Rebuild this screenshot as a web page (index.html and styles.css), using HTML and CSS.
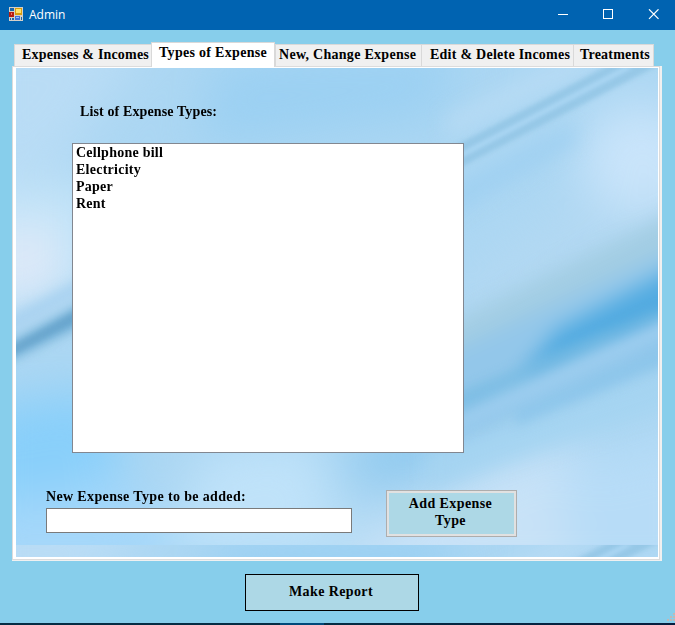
FILE: index.html
```html
<!DOCTYPE html>
<html lang="en">
<head>
<meta charset="utf-8">
<title>Admin</title>
<link rel="stylesheet" href="styles.css">
</head>
<body>
<div class="window">
  <header class="titlebar">
    <svg class="app-icon" width="14" height="14" viewBox="0 0 14 14" shape-rendering="crispEdges">
      <path fill="#d5d0c8" d="M0 0H14V14H0Z"/>
      <path fill="#1967ad" d="M1 1H5V4H1ZM1 11H2V13H1ZM3 11H5V13H3ZM12 10H13V13H12Z"/>
      <path fill="#b61c12" d="M0 5H5V10H0Z"/><path fill="#f0766a" d="M2 6H3V8H2Z"/>
      <path fill="#d89d10" d="M6 1H13V8H6Z"/><path fill="#ffe16b" d="M7 2H12V6H7Z"/>
      <path fill="#3e72d8" d="M6 9H11V13H6Z"/><path fill="#9bc0ff" d="M7 10H10V11H7Z"/>
    </svg>
    <span class="title">Admin</span>
    <div class="controls">
      <svg width="102" height="12" viewBox="0 0 102 12" fill="none" stroke="#fff">
        <path d="M0 5.5H10"/>
        <rect x="45.5" y=".5" width="9" height="9"/>
        <path d="M91 .3L100.5 9.8M100.5 .3L91 9.8" stroke-width="1.2"/>
      </svg>
    </div>
  </header>

  <main class="client">
    <nav class="tabs">
      <div class="tab tab-expenses">Expenses &amp; Incomes</div>
      <div class="tab tab-types active">Types of Expense</div>
      <div class="tab tab-change">New, Change Expense</div>
      <div class="tab tab-edit">Edit &amp; Delete Incomes</div>
      <div class="tab tab-treatments">Treatments</div>
    </nav>
    <section class="frame">
      <div class="page">
        <svg class="backdrop" width="642" height="489" viewBox="0 0 642 489">
          <defs>
            <filter id="b3" x="-20%" y="-20%" width="140%" height="140%" color-interpolation-filters="sRGB"><feGaussianBlur stdDeviation="2.2"/></filter>
            <filter id="b9" x="-30%" y="-30%" width="160%" height="160%" color-interpolation-filters="sRGB"><feGaussianBlur stdDeviation="10"/></filter>
            <filter id="b5" x="-30%" y="-30%" width="160%" height="160%" color-interpolation-filters="sRGB"><feGaussianBlur stdDeviation="6"/></filter>
            <filter id="b25" x="-60%" y="-60%" width="220%" height="220%" color-interpolation-filters="sRGB"><feGaussianBlur stdDeviation="24"/></filter>
            <clipPath id="edge"><rect width="642" height="477"/></clipPath>
            <g id="sky" clip-path="url(#edge)">
              <rect width="642" height="477" fill="#acd7f3"/>
              <g filter="url(#b25)">
                <path fill="#b9dcf5" d="M-40-40H140L50 90L-40 140Z"/>
                <path fill="#9bd0f2" d="M200 -10L450 -20L420 50L180 80Z"/>
                <path fill="#c6e5f8" d="M-50 130L80 110L80 220L-50 270Z"/>
                <ellipse cx="8" cy="195" rx="38" ry="38" fill="#e0e9f8"/>
                <path fill="#88cffa" d="M-40 340L90 320L110 400L-40 500Z"/>
                <path fill="#a4d7fa" d="M-40 440L100 410L200 500H-60Z"/>
                <path fill="#bfe2f9" d="M190 380L300 370L330 490H150Z"/>
                <path fill="#8ac7ee" d="M320 390L440 340L480 360L370 420Z"/>
                <path fill="#c8e2f7" d="M340 470L500 385L560 370L620 520H320Z"/>
                <path fill="#b7dcf7" d="M540 400L690 360V520H560Z"/>
                <path fill="#b2d8f2" d="M430 220L600 90L690 80V170L440 270Z"/>
                <ellipse cx="625" cy="90" rx="60" ry="55" fill="#c9e4fa"/>
              </g>
              <g filter="url(#b9)">
                <path fill="#b7dbf4" d="M430 50L550 -10H600L430 70Z"/>
                <path fill="#9fd0f1" d="M430 122L560 55V75L430 150Z"/>
                <path fill="#a3cde3" d="M420 262L680 133V185L420 300Z"/>
                <path fill="#93c7ea" d="M420 290L680 170V280L420 380Z"/>
                <path fill="#52abe1" d="M540 262L690 183V250L500 312Z"/>
                <path fill="#80c0e6" d="M410 345L600 270L590 290L410 365Z"/>
                <path fill="#a5d4f1" d="M410 385L680 285V330L410 420Z"/>
              </g>
              <g filter="url(#b5)">
                <path fill="#77bae3" opacity=".7" d="M430 332L640 242L660 245L430 345Z"/>
                <path fill="#9bccee" d="M430 352L660 246V268L430 370Z"/>
                <path fill="#88c3e9" opacity=".7" d="M500 343L660 273V292L500 358Z"/>
                <path fill="#a9d2f0" d="M-20 255L75 205V222L-20 274Z"/>
                <path fill="#65a6cf" d="M-20 284L75 231V252L-20 298Z"/>
              </g>
              <g filter="url(#b3)">
                <path fill="#8fc3e3" opacity=".75" d="M435 80L595 -4H645L435 104Z"/>
                <path fill="#add8f5" d="M435 90L608 -1H618L435 95Z"/>
                <path fill="#639fc6" opacity=".35" d="M-5 278L70 238V247L-5 288Z"/>
              </g>
            </g>
          </defs>
          <use href="#sky"/>
          <use href="#sky" y="477"/>
        </svg>
        <div class="content">
          <div class="heading">List of Expense Types:</div>
          <ul class="listbox">
            <li>Cellphone bill</li>
            <li>Electricity</li>
            <li>Paper</li>
            <li>Rent</li>
          </ul>
          <div class="form">
            <div class="field">
              <label for="type">New Expense Type to be added:</label>
              <input id="type" type="text">
            </div>
            <button class="add">Add Expense<br>Type</button>
          </div>
        </div>
      </div>
    </section>
    <button class="report">Make Report</button>
    <svg class="grip" width="8" height="8" viewBox="0 0 8 8" fill="#c2b8b5"><path d="M0 6h2v2H0zM3 6h2v2H3zM6 6h2v2H6zM3 3h2v2H3zM6 3h2v2H6zM6 0h2v2H6z"/></svg>
  </main>
  <footer class="taskbar"></footer>
</div>
</body>
</html>
```
FILE: styles.css
```css
* { box-sizing: border-box; }
body { margin: 0; }
.window {
  width: 675px; height: 625px; overflow: hidden;
  display: flex; flex-direction: column;
  background: #87ceeb; color: #000;
  font: bold 14px/17px "Liberation Serif", serif;
}
.titlebar {
  height: 30px; flex: none; display: flex; align-items: center;
  padding: 0 15px 0 9px; background: #0063b1; color: #fff;
  font: 12px/16px "Open Sans", sans-serif;
}
.app-icon { margin-top: -2px; }
.title { margin-left: 6px; }
.controls { margin-left: auto; height: 12px; display: flex; }
.client { position: relative; flex: 1; display: flex; flex-direction: column; padding: 12px 13px 0 12px; }
.tabs { display: flex; align-items: flex-end; height: 24px; padding-left: 2px; }
.tab {
  height: 22px; padding-top: 1px; white-space: nowrap;
  background: #f0f0f0; border: 1px solid #d9d9d9; border-width: 1px 0 0 1px;
  letter-spacing: .25px;
}
.tab-expenses { width: 137px; padding-left: 7px; letter-spacing: .18px; }
.tab-types { width: 124px; padding-left: 7px; letter-spacing: .3px; }
.tab-change { width: 146px; padding-left: 3px; letter-spacing: .28px; }
.tab-edit { width: 152px; padding-left: 8px; }
.tab-treatments { width: 81px; padding-left: 6px; border-right-width: 1px; letter-spacing: .2px; }
.tab.active { height: 25px; margin-bottom: -1px; background: #fff; border-right-width: 1px; position: relative; z-index: 1; }
.frame {
  width: 650px; height: 495px; flex: none;
  background: #fff; border: solid #f0f0f0; border-width: 0 2px 1px 0;
}
.page {
  position: relative; width: 648px; height: 494px;
  border: 1px solid #dcdcdc; padding: 1px 1px 2px 3px;
}
.backdrop { position: absolute; left: 3px; top: 1px; }
.content { position: relative; width: 642px; height: 489px; padding: 35px 0 0 30px; }
.heading { margin-left: 34px; letter-spacing: .12px; }
.listbox {
  width: 392px; height: 310px; margin: 23px 0 0 26px; padding: 0 3px;
  list-style: none; background: #fff; border: 1px solid #828790; letter-spacing: .25px;
}
.form { display: flex; align-items: flex-start; gap: 34px; padding-top: 37px; }
.field { width: 306px; display: flex; flex-direction: column; letter-spacing: .36px; }
.field label { margin-bottom: 2px; margin-top: -2px; white-space: nowrap; }
.field input { width: 306px; height: 25px; margin: 1px 0 0; border: 1px solid #7a7a7a; background: #fff; font: inherit; }
button { margin: 0; padding: 0; color: #000; font: inherit; background: #add8e6; letter-spacing: .4px; }
.add { width: 131px; height: 47px; border: 1px solid #adadad; box-shadow: inset 0 0 0 2px #e1e1e1; padding-bottom: 3px; padding-right: 2px; }
.report { width: 174px; height: 37px; margin: 13px 0 0 233px; border: 1px solid #000; padding-right: 2px; padding-bottom: 2px; }
.grip { position: absolute; right: 0; bottom: 2px; }
.taskbar { height: 2px; background: linear-gradient(90deg, #042c43 280px, #00497a 280px, #00497a 324px, #042c43 324px, #061d3e); }
```
